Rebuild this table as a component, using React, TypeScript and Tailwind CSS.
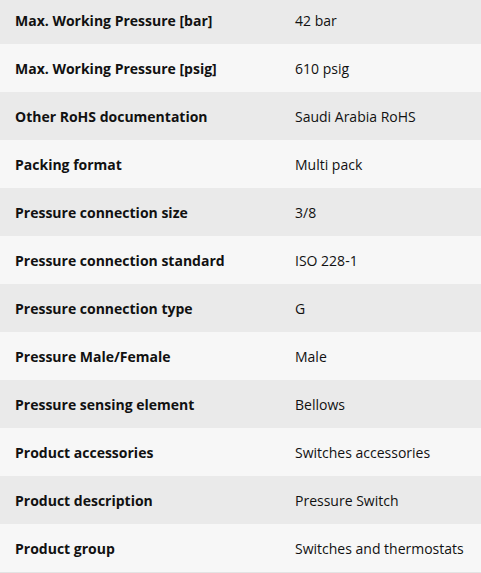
const rows: [string, string][] = [
  ['Max. Working Pressure [bar]', '42 bar'],
  ['Max. Working Pressure [psig]', '610 psig'],
  ['Other RoHS documentation', 'Saudi Arabia RoHS'],
  ['Packing format', 'Multi pack'],
  ['Pressure connection size', '3/8'],
  ['Pressure connection standard', 'ISO 228-1'],
  ['Pressure connection type', 'G'],
  ['Pressure Male/Female', 'Male'],
  ['Pressure sensing element', 'Bellows'],
  ['Product accessories', 'Switches accessories'],
  ['Product description', 'Pressure Switch'],
  ['Product group', 'Switches and thermostats'],
]

export default function App() {
  return (
    <div className="h-[573px] w-[481px] overflow-hidden bg-white font-['Open_Sans',sans-serif] text-[14px] text-[#111]">
      <div className="-mt-1 border-b border-[#e3e3e3]">
        {rows.map(([label, value], i) => (
          <div
            key={label}
            className={`flex h-12 items-center ${i % 2 === 0 ? 'bg-[#eaeaea]' : 'bg-[#f7f7f7]'}`}
          >
            <div className="w-[295px] shrink-0 pl-[15px] font-bold">{label}</div>
            <div>{value}</div>
          </div>
        ))}
      </div>
    </div>
  )
}
